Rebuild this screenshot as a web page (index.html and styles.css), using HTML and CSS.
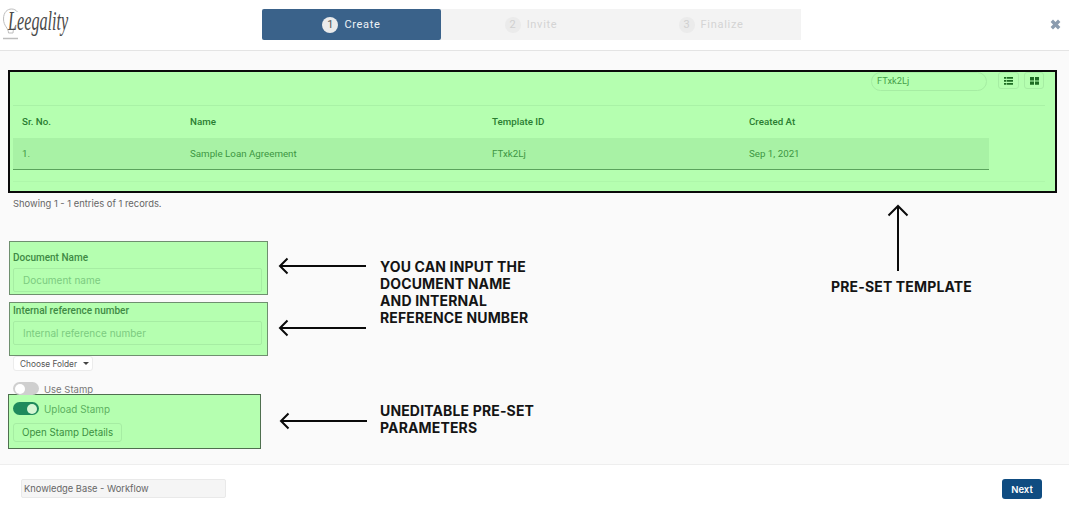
FILE: index.html
```html
<!DOCTYPE html>
<html lang="en">
<head>
<meta charset="utf-8">
<title>Leegality - Create</title>
<link rel="stylesheet" href="styles.css">
</head>
<body>
<header class="topbar">
  <div class="logo">
    <svg class="bulb" width="18" height="40" viewBox="0 0 18 40" fill="none" stroke="#bdbdbd" stroke-width="1">
      <path d="M6.500 33C6.500 28 1.500 26 1.500 19C1.500 12 5.500 9 9.500 9C12 9 14 10 15.500 12"/>
      <path d="M11 33C11 30 12 28 14 25"/>
      <path d="M6.500 33H11"/>
      <path d="M1 38.500H16" stroke-width="1.500"/>
    </svg>
    <span class="logo-text">Leegality</span>
  </div>
  <ol class="stepper">
    <li class="step step-active"><span class="step-num">1</span>Create</li>
    <li class="step"><span class="step-num">2</span>Invite</li>
    <li class="step"><span class="step-num">3</span>Finalize</li>
  </ol>
  <svg class="close" width="11" height="11" viewBox="0 0 11 11"><path d="M1.800 1.800L9.200 9.200M9.200 1.800L1.800 9.200" stroke="#8a9bae" stroke-width="3.400"/></svg>
</header>

<main class="content">
  <section class="templates">
    <div class="toolbar">
      <div class="search">FTxk2Lj</div>
      <button class="icon-btn">
        <svg width="9" height="8" viewBox="0 0 9 8" fill="#1d6b22"><path d="M0 0h2v1.800H0zM2.600 0h6.400v1.800H2.600zM0 3h2v1.800H0zM2.600 3h6.400v1.800H2.600zM0 6h2v1.800H0zM2.600 6h6.400v1.800H2.600z"/></svg>
      </button>
      <button class="icon-btn icon-btn-narrow">
        <svg width="9" height="8" viewBox="0 0 9 8" fill="#1d6b22"><path d="M0 0h4v3.400H0zM5 0h4v3.400H5zM0 4.400h4v3.400H0zM5 4.400h4v3.400H5z"/></svg>
      </button>
    </div>
    <div class="table-head">
      <span class="col col-sr">Sr. No.</span>
      <span class="col col-name">Name</span>
      <span class="col col-id">Template ID</span>
      <span class="col col-date">Created At</span>
    </div>
    <div class="table-row">
      <span class="col col-sr">1.</span>
      <span class="col col-name">Sample Loan Agreement</span>
      <span class="col col-id">FTxk2Lj</span>
      <span class="col col-date">Sep 1, 2021</span>
    </div>
    <div class="table-foot"></div>
  </section>
  <p class="records">Showing 1 - 1 entries of 1 records.</p>

  <div class="field-box field-box-first">
    <label class="field-label">Document Name</label>
    <div class="field-input">Document name</div>
  </div>
  <div class="field-box field-box-second">
    <label class="field-label">Internal reference number</label>
    <div class="field-input">Internal reference number</div>
  </div>

  <button class="folder-btn">Choose Folder<span class="caret"></span></button>

  <div class="toggle-row toggle-row-plain">
    <span class="toggle"><span class="knob"></span></span>
    <span class="toggle-label">Use Stamp</span>
  </div>

  <div class="stamp-box">
    <div class="toggle-row">
      <span class="toggle toggle-on"><span class="knob"></span></span>
      <span class="toggle-label toggle-label-on">Upload Stamp</span>
    </div>
    <button class="stamp-btn">Open Stamp Details</button>
  </div>
</main>

<footer class="footer">
  <div class="doc-title">Knowledge Base - Workflow</div>
  <button class="next">Next</button>
</footer>

<svg class="arrow arrow-doc" width="90" height="18" viewBox="0 0 90 18" fill="none" stroke="#0a0a0a" stroke-width="2"><path d="M88 9H2M9.500 1.500L2 9L9.500 16.500"/></svg>
<svg class="arrow arrow-ref" width="90" height="18" viewBox="0 0 90 18" fill="none" stroke="#0a0a0a" stroke-width="2"><path d="M88 9H2M9.500 1.500L2 9L9.500 16.500"/></svg>
<svg class="arrow arrow-stamp" width="90" height="18" viewBox="0 0 90 18" fill="none" stroke="#0a0a0a" stroke-width="2"><path d="M88 9H2M9.500 1.500L2 9L9.500 16.500"/></svg>
<svg class="arrow arrow-up" width="22" height="68" viewBox="0 0 22 68" fill="none" stroke="#0a0a0a" stroke-width="2"><path d="M11 67V2M1.500 11.500L11 2L20.500 11.500"/></svg>

<p class="note note-input">YOU CAN INPUT THE<br>DOCUMENT NAME<br>AND INTERNAL<br>REFERENCE NUMBER</p>
<p class="note note-stamp">UNEDITABLE PRE-SET<br>PARAMETERS</p>
<p class="note note-template">PRE-SET TEMPLATE</p>
</body>
</html>
```

FILE: styles.css
```css
* { box-sizing: border-box; }

html, body { margin: 0; padding: 0; }

body {
  position: relative;
  width: 1069px;
  height: 510px;
  overflow: hidden;
  background: #fafafa;
  font-family: "Inter", "Liberation Sans", sans-serif;
  color: #555;
  display: flex;
  flex-direction: column;
}

button { font-family: inherit; cursor: default; }

/* Header */
.topbar {
  height: 51px;
  flex: none;
  background: #fff;
  border-bottom: 1px solid #e4e4e4;
  display: flex;
  align-items: flex-start;
  padding-left: 2px;
}

.logo {
  width: 260px;
  height: 50px;
  display: flex;
  align-items: flex-start;
}

.bulb { flex: none; }

.logo-text {
  display: inline-block;
  font-family: "Liberation Serif", serif;
  font-style: italic;
  font-size: 27px;
  line-height: 28px;
  color: #4a4a4a;
  margin: 7px 0 0 -12px;
  transform: scaleX(0.6);
  transform-origin: left center;
}

.stepper {
  list-style: none;
  margin: 9px 0 0;
  padding: 0;
  width: 539px;
  height: 31px;
  display: flex;
  background: #f3f3f3;
}

.step {
  width: 180px;
  display: flex;
  align-items: center;
  justify-content: center;
  gap: 6px;
  font-family: "Roboto", sans-serif;
  font-size: 11px;
  letter-spacing: 0.7px;
  color: #d4d4d4;
}

.step-active {
  width: 179px;
  background: #3a628a;
  color: #eef2f6;
  border-radius: 2px;
}

.step-num {
  width: 16px;
  height: 16px;
  border-radius: 50%;
  background: #ebebeb;
  color: #d0d0d0;
  font-size: 11px;
  letter-spacing: 0;
  display: flex;
  align-items: center;
  justify-content: center;
}

.step-active .step-num { color: #555; }

.close { margin: 19px 0 0 249px; }

/* Main */
.content {
  flex: 1;
  padding: 19px 13px 0 8px;
}

.templates {
  width: 1049px;
  height: 123px;
  border: 2px solid #0a0a0a;
  background: #b5ffb0;
  padding: 0 10px 0 3px;
  font-family: "Roboto", sans-serif;
  color: #2f8a35;
  font-size: 9.750px;
}

.toolbar {
  height: 34px;
  display: flex;
  align-items: flex-start;
  justify-content: flex-end;
  border-bottom: 1px solid #a9f2a6;
  padding-right: 1px;
  gap: 5px;
}

.search {
  width: 116px;
  height: 19px;
  margin-right: 6px;
  border: 1px solid #a6eda3;
  border-radius: 10px;
  padding: 0 5px;
  line-height: 16px;
  font-size: 9.300px;
  color: #45a04a;
}

.icon-btn {
  width: 21px;
  height: 17px;
  padding: 0;
  border: 1px solid #a6eda3;
  border-radius: 3px;
  background: #b5ffb0;
  display: flex;
  align-items: center;
  justify-content: center;
}

.icon-btn-narrow { width: 20px; }

.table-head, .table-row {
  display: flex;
  align-items: center;
  width: 976px;
}

.table-head {
  height: 32px;
  padding-bottom: 2px;
  font-weight: 500;
  color: #2a7d31;
}

.table-row {
  height: 32px;
  background: #a8f2a5;
  border-bottom: 1px solid #5aa35c;
  color: #3d9643;
}

.col { display: block; flex: none; }
.col-sr { width: 177px; padding-left: 9px; }
.col-name { width: 302px; }
.col-id { width: 257px; }
.col-date { width: 120px; }

.table-foot {
  height: 12px;
  border-bottom: 1px solid #aef7aa;
}

.records {
  margin: 5px 0 0 5px;
  font-size: 9.400px;
  line-height: 11px;
  color: #666;
}

.field-box {
  width: 259px;
  margin-left: 1px;
  background: #b5ffb0;
  border: 1px solid #6f8f6f;
  padding: 0 5px 0 3px;
  font-size: 10px;
}

.field-box-first { height: 54px; margin-top: 32px; padding-top: 10px; }
.field-box-second { height: 54px; margin-top: 7px; padding-top: 2px; }

.field-label {
  display: block;
  height: 11px;
  line-height: 11px;
  font-family: "Roboto", sans-serif;
  font-weight: 500;
  color: #3f8a45;
}

.field-input {
  height: 24px;
  margin-top: 5px;
  border: 1px solid #a6eda3;
  border-radius: 2px;
  padding-left: 9px;
  line-height: 22px;
  color: #7ccb80;
}

.folder-btn {
  display: flex;
  align-items: center;
  gap: 6px;
  height: 15px;
  width: 80px;
  margin: 0 0 0 5px;
  padding: 0 0 0 6px;
  background: #fff;
  border: 1px solid #ececec;
  border-radius: 3px;
  font-size: 8.300px;
  color: #555;
}

.caret {
  width: 0;
  height: 0;
  border-left: 3px solid transparent;
  border-right: 3px solid transparent;
  border-top: 3px solid #444;
}

.toggle-row {
  display: flex;
  align-items: center;
  gap: 5px;
  height: 13px;
}

.toggle-row-plain { margin: 11px 0 0 5px; }

.toggle {
  width: 26px;
  height: 13px;
  border-radius: 7px;
  background: #cfcfcf;
  padding: 1.500px 2px;
  display: flex;
  flex: none;
}

.toggle-on {
  background: #1f8a5c;
  justify-content: flex-end;
}

.knob {
  width: 10px;
  height: 10px;
  border-radius: 50%;
  background: #fff;
}

.toggle-on .knob { background: #d6f7d4; }

.toggle-label {
  font-size: 9.500px;
  line-height: 15px;
  padding-top: 1px;
  color: #777;
}

.toggle-label-on { font-size: 9.900px; color: #5cb061; }

.stamp-box {
  width: 253px;
  height: 55px;
  margin-top: -1px;
  background: #b5ffb0;
  border: 1px solid #4f6f4f;
  padding: 7px 0 0 4px;
}

.stamp-btn {
  display: block;
  width: 109px;
  height: 19px;
  margin-top: 8px;
  padding: 0;
  background: transparent;
  border: 1px solid #a6eda3;
  border-radius: 3px;
  font-size: 9.750px;
  color: #3c8f42;
}

/* Footer */
.footer {
  height: 46px;
  flex: none;
  background: #fff;
  border-top: 1px solid #eeeeee;
  display: flex;
  align-items: flex-start;
  justify-content: space-between;
  padding: 14px 27px 0 21px;
}

.doc-title {
  width: 205px;
  height: 19px;
  background: #f5f5f5;
  border: 1px solid #e9e9e9;
  border-radius: 2px;
  padding-left: 2px;
  font-size: 9.300px;
  line-height: 17px;
  color: #666;
}

.next {
  width: 40px;
  height: 20px;
  padding: 0;
  background: #0f4c81;
  border: 0;
  border-radius: 3px;
  color: #fff;
  font-size: 9.500px;
  font-weight: 600;
}

/* Annotations over the page */
.arrow { position: absolute; }
.arrow-doc { left: 278px; top: 257px; }
.arrow-ref { left: 278px; top: 319px; }
.arrow-stamp { left: 279px; top: 412px; }
.arrow-up { left: 887px; top: 204px; }

.note {
  position: absolute;
  margin: 0;
  font-size: 14px;
  line-height: 17px;
  font-weight: 700;
  letter-spacing: 0.15px;
  color: #141414;
}

.note-input { left: 380px; top: 258px; }
.note-stamp { left: 380px; top: 402px; }
.note-template { left: 831px; top: 278px; }
```
